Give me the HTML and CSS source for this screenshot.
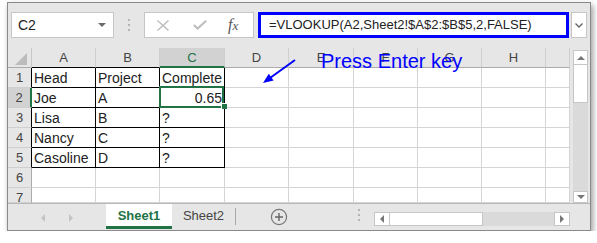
FILE: index.html
```html
<!DOCTYPE html>
<html lang="en">
<head>
  <meta charset="UTF-8" />
  <meta name="viewport" content="width=device-width, initial-scale=1.0" />
  <title>VLOOKUP example</title>
  <link rel="stylesheet" href="styles.css">
</head>
<body>
  <div class="window">
    <div class="formula-bar">
      <div class="name-box">
        <span>C2</span>
        <span class="drop"></span>
      </div>
      <div class="grip"><span></span><span></span><span></span></div>
      <div class="fx-box">
        <svg class="icon-x" width="12" height="11" viewBox="0 0 12 11">
          <path d="M0.5 0.5 L11.5 10.5 M11.5 0.5 L0.5 10.5" stroke="#bdbdbd" stroke-width="1.4" fill="none"/>
        </svg>
        <svg class="icon-check" width="14" height="10" viewBox="0 0 14 10">
          <path d="M0.8 5 L4.6 8.6 L13.2 0.8" stroke="#bdbdbd" stroke-width="2" fill="none"/>
        </svg>
        <span class="fx">f<span>x</span></span>
      </div>
      <div class="formula">=VLOOKUP(A2,Sheet2!$A$2:$B$5,2,FALSE)</div>
      <div class="expand">
        <svg width="8" height="5" viewBox="0 0 8 5">
          <path d="M0.5 0.5 L4 4 L7.5 0.5" stroke="#666" stroke-width="1.4" fill="none"/>
        </svg>
      </div>
    </div>

    <div class="sheet-area">
      <div class="sheet">
        <div class="corner"><span class="select-all"></span></div>
        <div class="col-head in">A</div>
        <div class="col-head in">B</div>
        <div class="col-head active">C</div>
        <div class="col-head">D</div>
        <div class="col-head">E</div>
        <div class="col-head">F</div>
        <div class="col-head">G</div>
        <div class="col-head">H</div>
        <div class="col-head"></div>

        <div class="row-head in">1</div>
        <div class="cell in">Head</div>
        <div class="cell in">Project</div>
        <div class="cell in">Complete</div>
        <div class="cell"></div><div class="cell"></div><div class="cell"></div>
        <div class="cell"></div><div class="cell"></div><div class="cell"></div>

        <div class="row-head active">2</div>
        <div class="cell in">Joe</div>
        <div class="cell in">A</div>
        <div class="cell in num sel">0.65<span class="handle"></span></div>
        <div class="cell"></div><div class="cell"></div><div class="cell"></div>
        <div class="cell"></div><div class="cell"></div><div class="cell"></div>

        <div class="row-head in">3</div>
        <div class="cell in">Lisa</div>
        <div class="cell in">B</div>
        <div class="cell in">?</div>
        <div class="cell"></div><div class="cell"></div><div class="cell"></div>
        <div class="cell"></div><div class="cell"></div><div class="cell"></div>

        <div class="row-head in">4</div>
        <div class="cell in">Nancy</div>
        <div class="cell in">C</div>
        <div class="cell in">?</div>
        <div class="cell"></div><div class="cell"></div><div class="cell"></div>
        <div class="cell"></div><div class="cell"></div><div class="cell"></div>

        <div class="row-head in">5</div>
        <div class="cell in">Casoline</div>
        <div class="cell in">D</div>
        <div class="cell in">?</div>
        <div class="cell"></div><div class="cell"></div><div class="cell"></div>
        <div class="cell"></div><div class="cell"></div><div class="cell"></div>

        <div class="row-head">6</div>
        <div class="cell"></div><div class="cell"></div><div class="cell"></div>
        <div class="cell"></div><div class="cell"></div><div class="cell"></div>
        <div class="cell"></div><div class="cell"></div><div class="cell"></div>

        <div class="row-head">7</div>
        <div class="cell"></div><div class="cell"></div><div class="cell"></div>
        <div class="cell"></div><div class="cell"></div><div class="cell"></div>
        <div class="cell"></div><div class="cell"></div><div class="cell"></div>
      </div>

      <div class="vscroll">
        <div class="sb-btn up"><span class="tri-up"></span></div>
        <div class="v-thumb"></div>
        <div class="v-track"></div>
        <div class="sb-btn down"><span class="tri-down"></span></div>
      </div>
    </div>

    <div class="tabs">
      <div class="tab-nav">
        <span class="tri-left"></span>
        <span class="tri-right"></span>
      </div>
      <div class="tab current">Sheet1</div>
      <div class="tab">Sheet2</div>
      <div class="tab-sep"></div>
      <div class="tab-add">
        <svg width="18" height="18" viewBox="0 0 18 18">
          <circle cx="9" cy="9" r="7.6" stroke="#777" stroke-width="1.2" fill="none"/>
          <path d="M9 5 V13 M5 9 H13" stroke="#666" stroke-width="1.4"/>
        </svg>
      </div>
      <div class="grip h-grip"><span></span><span></span><span></span></div>
      <div class="hscroll">
        <div class="sb-btn left"><span class="tri-left dark"></span></div>
        <div class="h-thumb"></div>
        <div class="h-track"></div>
        <div class="sb-btn right"><span class="tri-right dark"></span></div>
      </div>
    </div>
  </div>

  <svg class="note-arrow" width="40" height="32" viewBox="0 0 40 32">
    <path d="M35 4 L10 22" stroke="#0000ff" stroke-width="2" fill="none"/>
    <path d="M3 27 L13.6 24.6 L8.8 17.8 Z" fill="#0000ff"/>
  </svg>
  <div class="note">Press Enter key</div>
</body>
</html>
```

FILE: styles.css
```css
body {
  margin: 0;
  background: #fff;
  font-family: "Liberation Sans", Arial, sans-serif;
  color: #222;
}

.window {
  box-sizing: border-box;
  width: 584px;
  height: 229px;
  margin: 2px 0 0 7px;
  border: 1px solid #8a8a8a;
  background: #e6e6e6;
  box-shadow: 2px 3px 6px rgba(0, 0, 0, 0.4);
  display: flex;
  flex-direction: column;
}

/* formula bar */
.formula-bar {
  box-sizing: border-box;
  height: 45px;
  display: flex;
  align-items: flex-start;
  padding: 9px 0 0 3px;
}

.name-box {
  box-sizing: border-box;
  width: 103px;
  height: 26px;
  background: #fff;
  border: 1px solid #c6c6c6;
  display: flex;
  align-items: center;
  justify-content: space-between;
  padding: 0 7px 0 6px;
  font-size: 14px;
}

.drop {
  width: 0;
  height: 0;
  border-left: 4px solid transparent;
  border-right: 4px solid transparent;
  border-top: 4px solid #6a6a6a;
}

.grip {
  width: 30px;
  height: 26px;
  display: flex;
  flex-direction: column;
  align-items: center;
  justify-content: center;
  gap: 3px;
}

.grip span {
  width: 2px;
  height: 2px;
  background: #b4b4b4;
}

.fx-box {
  box-sizing: border-box;
  width: 110px;
  height: 26px;
  background: #fff;
  border: 1px solid #c6c6c6;
  display: flex;
  align-items: center;
}

.icon-x {
  margin-left: 12px;
}

.icon-check {
  margin-left: 24px;
}

.fx {
  margin-left: 21px;
  font-family: "Liberation Serif", "Times New Roman", serif;
  font-style: italic;
  font-size: 16px;
  color: #555;
}

.fx span {
  font-size: 13px;
}

.formula {
  box-sizing: border-box;
  margin-left: 4px;
  width: 311px;
  height: 26px;
  background: #fff;
  border: 3px solid #0000ff;
  padding-left: 8px;
  font-size: 13px;
  line-height: 20px;
  white-space: nowrap;
}

.expand {
  box-sizing: border-box;
  margin-left: 2px;
  width: 16px;
  height: 26px;
  background: #fff;
  border: 1px solid #c6c6c6;
  display: flex;
  align-items: center;
  justify-content: center;
}

/* grid */
.sheet-area {
  display: flex;
  height: 155px;
}

.sheet {
  display: grid;
  grid-template-columns: 24px 64px 64px 65px 64px 65px 64px 64px 64px 24px;
  grid-template-rows: repeat(7, 20px) 15px;
  width: 562px;
  background: #fff;
  overflow: hidden;
}

.sheet > div {
  box-sizing: border-box;
  position: relative;
  white-space: nowrap;
}

.corner {
  background: #e6e6e6;
  border-right: 1px solid #c8c8c8;
  border-bottom: 1px solid #ababab;
  display: flex;
  align-items: flex-end;
  justify-content: flex-end;
  padding: 0 4px 2px 0;
}

.select-all {
  width: 12px;
  height: 12px;
  background: #bcbcbc;
  clip-path: polygon(100% 0, 100% 100%, 0 100%);
}

.col-head {
  background: #e6e6e6;
  color: #444;
  font-size: 13px;
  line-height: 19px;
  text-align: center;
  border-right: 1px solid #cfcfcf;
  border-bottom: 1px solid #ababab;
}

.col-head.in {
  border-bottom-color: #000;
}

.col-head.active {
  background: #d2d2d2;
  color: #217346;
  border-bottom: 2px solid #217346;
}

.row-head {
  background: #e6e6e6;
  color: #444;
  font-size: 13px;
  line-height: 20px;
  text-align: center;
  border-right: 1px solid #ababab;
  border-bottom: 1px solid #cfcfcf;
}

.row-head.in {
  border-right-color: #000;
}

.row-head.active {
  background: #d2d2d2;
  border-right: 2px solid #217346;
}

.cell {
  font-size: 14px;
  line-height: 20px;
  padding: 0 2px;
  border-right: 1px solid #d4d4d4;
  border-bottom: 1px solid #d4d4d4;
}

.cell.in {
  border-right-color: #000;
  border-bottom-color: #000;
}

.cell.num {
  text-align: right;
}

.cell.sel::after {
  content: "";
  position: absolute;
  top: -2px;
  left: -1px;
  right: 0;
  bottom: -1px;
  border: 2px solid #217346;
}

.handle {
  position: absolute;
  right: -3px;
  bottom: -2px;
  width: 6px;
  height: 6px;
  box-sizing: border-box;
  background: #217346;
  border-top: 1px solid #fff;
  border-left: 1px solid #fff;
  z-index: 1;
}

/* scrollbars */
.vscroll {
  flex: 1;
  display: flex;
  flex-direction: column;
  padding: 2px 2px 0 3px;
}

.sb-btn {
  box-sizing: border-box;
  background: #fff;
  border: 1px solid #c6c6c6;
  display: flex;
  align-items: center;
  justify-content: center;
}

.sb-btn.up {
  height: 15px;
}

.sb-btn.down {
  height: 12px;
}

.v-thumb {
  box-sizing: border-box;
  height: 39px;
  margin-top: -1px;
  background: #fff;
  border: 1px solid #c6c6c6;
}

.v-track {
  flex: 1;
  background: #dadada;
}

.tri-up,
.tri-down {
  width: 0;
  height: 0;
  border-left: 4px solid transparent;
  border-right: 4px solid transparent;
}

.tri-up {
  border-bottom: 4px solid #777;
}

.tri-down {
  border-top: 4px solid #777;
}

.tri-left,
.tri-right {
  width: 0;
  height: 0;
  border-top: 4px solid transparent;
  border-bottom: 4px solid transparent;
}

.tri-left {
  border-right: 4px solid #c4c4c4;
}

.tri-right {
  border-left: 4px solid #c4c4c4;
}

.tri-left.dark {
  border-right-color: #777;
}

.tri-right.dark {
  border-left-color: #777;
}

/* sheet tabs */
.tabs {
  box-sizing: border-box;
  height: 27px;
  border-top: 1px solid #b8b8b8;
  display: flex;
}

.tab-nav {
  width: 98px;
  display: flex;
  align-items: center;
  gap: 24px;
  padding: 2px 0 0 33px;
  box-sizing: border-box;
}

.tab {
  box-sizing: border-box;
  width: 63px;
  height: 25px;
  padding-top: 4px;
  text-align: center;
  font-size: 13px;
  color: #444;
}

.tab.current {
  width: 66px;
  background: #fff;
  color: #217346;
  font-weight: bold;
  border-bottom: 3px solid #217346;
}

.tab-sep {
  width: 1px;
  height: 17px;
  margin-top: 4px;
  background: #a8a8a8;
}

.tab-add {
  width: 86px;
  display: flex;
  justify-content: center;
  padding-top: 4px;
}

.h-grip {
  width: 16px;
  margin-left: 29px;
  height: 22px;
}

.hscroll {
  display: flex;
  width: 196px;
  height: 14px;
  margin: 8px 0 0 7px;
}

.sb-btn.left,
.sb-btn.right {
  width: 16px;
}

.h-thumb {
  box-sizing: border-box;
  width: 94px;
  background: #fff;
  border: 1px solid #c6c6c6;
  margin-left: -1px;
}

.h-track {
  flex: 1;
  background: #dadada;
}

/* annotation */
.note-arrow {
  position: absolute;
  left: 260px;
  top: 56px;
}

.note {
  position: absolute;
  left: 321px;
  top: 51px;
  font-size: 20px;
  line-height: 20px;
  color: #0000ff;
}
```
